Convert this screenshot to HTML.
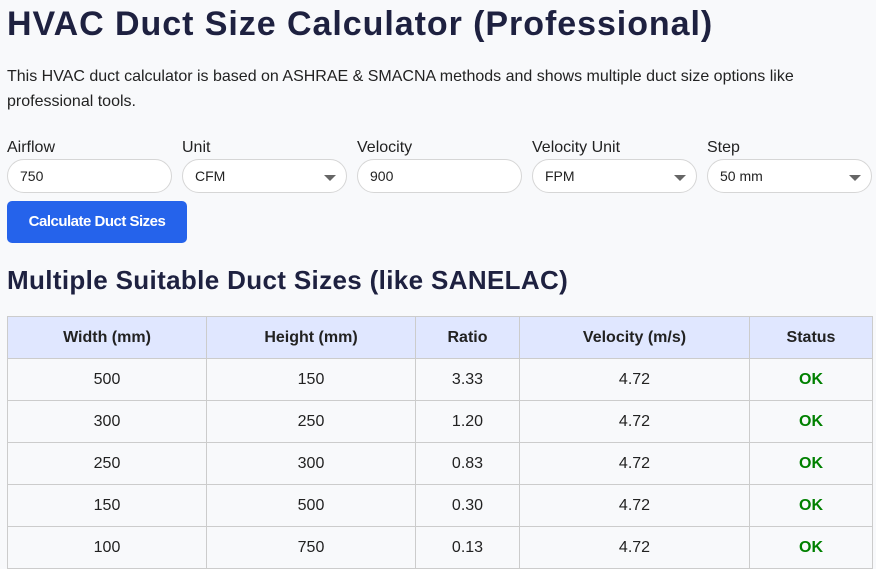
<!DOCTYPE html>
<html><head><style>
body{margin:0;background:#f8f9fb;font-family:"Liberation Sans",sans-serif;color:#222;width:876px;height:560px;overflow:hidden;position:relative}
h1{position:absolute;left:7px;top:5px;margin:0;font-size:34px;font-weight:bold;color:#1e2140;letter-spacing:0.95px}
p{position:absolute;left:7px;top:64px;margin:0;font-size:16px;line-height:25px;width:860px;color:#222}
.f{position:absolute;top:137px;width:165px}
.f label{display:block;font-size:16px;color:#222;height:22px;padding-top:2px;margin-bottom:-2px}
.f .i{box-sizing:border-box;height:34px;border:1px solid #d6d6d6;border-radius:17px;background:#fff;font-size:14px;padding:8px 12px;position:relative}
.f .i.s:after{content:"";position:absolute;right:10px;top:15px;border-left:6px solid transparent;border-right:6px solid transparent;border-top:6px solid #666}
.btn{position:absolute;left:7px;top:201px;width:180px;height:42px;background:#2563eb;border-radius:5px;color:#fff;font-weight:bold;font-size:15px;text-align:center;line-height:42px;letter-spacing:-0.5px}
h2{position:absolute;left:7px;top:265px;margin:0;font-size:26px;font-weight:bold;color:#1e2140;letter-spacing:0.35px}
table{position:absolute;left:7px;top:316px;border-collapse:collapse;width:866px;font-size:16px}
td,th{border:1px solid #ccc;text-align:center;height:41px;padding:0}
th{background:#e0e7ff;font-weight:bold;color:#222;font-size:16px}
td{background:#f8f9fb}
.ok{color:#008000;font-weight:bold}
</style></head><body>
<h1>HVAC Duct Size Calculator (Professional)</h1>
<p>This HVAC duct calculator is based on ASHRAE &amp; SMACNA methods and shows multiple duct size options like professional tools.</p>
<div class="f" style="left:7px"><label>Airflow</label><div class="i">750</div></div>
<div class="f" style="left:182px"><label>Unit</label><div class="i s">CFM</div></div>
<div class="f" style="left:357px"><label>Velocity</label><div class="i">900</div></div>
<div class="f" style="left:532px"><label>Velocity Unit</label><div class="i s">FPM</div></div>
<div class="f" style="left:707px"><label>Step</label><div class="i s">50 mm</div></div>
<div class="btn">Calculate Duct Sizes</div>
<h2>Multiple Suitable Duct Sizes (like SANELAC)</h2>
<table>
<tr><th style="width:198px">Width (mm)</th><th style="width:208px">Height (mm)</th><th style="width:103px">Ratio</th><th style="width:229px">Velocity (m/s)</th><th>Status</th></tr>
<tr><td>500</td><td>150</td><td>3.33</td><td>4.72</td><td class="ok">OK</td></tr>
<tr><td>300</td><td>250</td><td>1.20</td><td>4.72</td><td class="ok">OK</td></tr>
<tr><td>250</td><td>300</td><td>0.83</td><td>4.72</td><td class="ok">OK</td></tr>
<tr><td>150</td><td>500</td><td>0.30</td><td>4.72</td><td class="ok">OK</td></tr>
<tr><td>100</td><td>750</td><td>0.13</td><td>4.72</td><td class="ok">OK</td></tr>
</table>
</body></html>
